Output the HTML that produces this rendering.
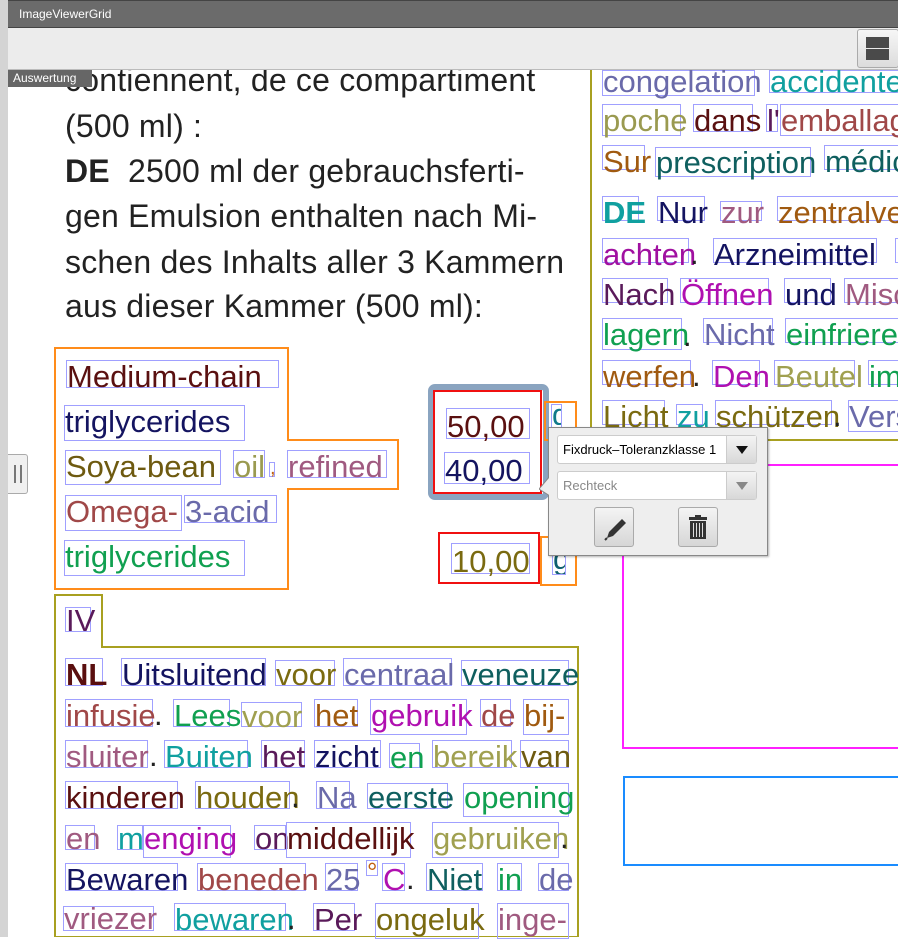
<!DOCTYPE html>
<html><head><meta charset="utf-8"><style>
*{margin:0;padding:0;box-sizing:border-box}
body{width:898px;height:937px;overflow:hidden;position:relative;background:#fff;font-family:"Liberation Sans",sans-serif}
.a{position:absolute}
.t{position:absolute;left:65px;font-size:32px;color:#222;white-space:nowrap;line-height:45px;letter-spacing:0.2px}
.w{position:absolute;border:1px solid #a0a0ff;font-size:31px;white-space:nowrap;line-height:26px;overflow:visible;height:28px;padding-top:3px}
.p{position:absolute;font-size:31px;color:#222;line-height:26px;padding-top:3px}
.dd{position:absolute;left:557px;width:200px;height:29px;background:#fff;border:1px solid #ccc;border-radius:3px;font-size:13px;line-height:27px;padding-left:5px}
.dd i{position:absolute;right:0;top:0;width:30px;height:27px;background:linear-gradient(#f4f4f4,#d8d8d8);border-left:1px solid #ccc}
.btn{position:absolute;top:507px;width:40px;height:40px;border:1px solid #aaa;border-radius:3px;background:linear-gradient(#f4f4f4,#d6d6d6)}
</style></head><body>
<div class="a" style="left:0;top:0;width:8px;height:937px;background:#d4d4d4"></div>
<div class="a" style="left:8px;top:0;width:890px;height:28px;background:#6b6b6b;border-top:1px solid #444;border-bottom:1px solid #444"></div>
<div class="a" style="left:19px;top:7px;font-size:12px;color:#fff">ImageViewerGrid</div>

<div class="t" style="top:58px">contiennent, de ce compartiment</div>
<div class="t" style="top:104px">(500 ml) :</div>
<div class="t" style="top:149px"><b>DE</b>&nbsp; 2500 ml der gebrauchsferti-</div>
<div class="t" style="top:194px">gen Emulsion enthalten nach Mi-</div>
<div class="t" style="top:240px">schen des Inhalts aller 3 Kammern</div>
<div class="t" style="top:284px">aus dieser Kammer (500 ml):</div>

<div class="a" style="left:8px;top:28px;width:890px;height:42px;background:#ececec;border-bottom:1px solid #bbb"></div>
<div class="a" style="left:857px;top:29px;width:42px;height:39px;border:1px solid #aaa;border-radius:3px;background:linear-gradient(#f6f6f6,#dcdcdc)"></div>
<div class="a" style="left:866px;top:37px;width:23px;height:11px;background:#4a4a4a"></div>
<div class="a" style="left:866px;top:49px;width:23px;height:11px;background:#4a4a4a"></div>
<div class="a" style="left:8px;top:70px;width:84px;height:17px;background:#666;color:#fff;font-size:12px;line-height:17px;padding-left:5px">Auswertung</div>

<svg class="a" style="left:0;top:0" width="898" height="937">
<polygon points="55,348 288,348 288,440 398,440 398,489 288,489 288,589 55,589" fill="none" stroke="#ff8c1a" stroke-width="2"/>
<polygon points="55,937 55,595 102,595 102,647 578,647 578,937" fill="none" stroke="#a8a020" stroke-width="2"/>
<polyline points="591,70 591,440 898,440" fill="none" stroke="#a8a020" stroke-width="2"/>
<rect x="623" y="465" width="290" height="283" fill="none" stroke="#ff20ff" stroke-width="2"/>
<rect x="624" y="777" width="290" height="88" fill="none" stroke="#1a8cff" stroke-width="2"/>
<rect x="431" y="387" width="115" height="110" rx="4" fill="#fff" stroke="#8aa4c0" stroke-width="6"/>
<rect x="434" y="391" width="107" height="102" fill="none" stroke="#f01010" stroke-width="2"/>
<rect x="439" y="533" width="100" height="50" fill="none" stroke="#f01010" stroke-width="2"/>
<rect x="545" y="402" width="31" height="38" fill="none" stroke="#ff8c1a" stroke-width="2"/>
<rect x="541" y="537" width="35" height="48" fill="none" stroke="#ff8c1a" stroke-width="2"/>
</svg>

<div class="a" style="left:8px;top:454px;width:20px;height:40px;background:#f0f0f0;border:1px solid #aaa;border-left:none;border-radius:0 3px 3px 0"></div>
<div class="a" style="left:14px;top:465px;width:2px;height:18px;background:#777"></div>
<div class="a" style="left:20px;top:465px;width:2px;height:18px;background:#777"></div>

<div class="w" style="left:66px;top:360px;width:213px;color:#5a1010">Medium-chain</div>
<div class="w" style="left:64px;top:405px;width:181px;height:36px;color:#141460">triglycerides</div>
<div class="w" style="left:65px;top:450px;width:156px;height:35px;color:#6e5a10">Soya-bean</div>
<div class="w" style="left:233px;top:450px;width:32px;color:#9a9a50">oil</div>
<div class="w" style="left:269px;top:462px;width:6px;height:15px;color:#c06010;font-size:20px;line-height:10px;padding:0">,</div>
<div class="w" style="left:287px;top:450px;width:100px;color:#a05a80">refined</div>
<div class="w" style="left:65px;top:495px;width:117px;height:36px;color:#a04848">Omega-</div>
<div class="w" style="left:184px;top:495px;width:93px;color:#6a6aaa">3-acid</div>
<div class="w" style="left:64px;top:540px;width:181px;height:36px;color:#10a050">triglycerides</div>

<div class="w" style="left:446px;top:408px;width:84px;height:31px;color:#5a1010;line-height:29px">50,00</div>
<div class="w" style="left:444px;top:452px;width:86px;height:32px;color:#141460;line-height:30px">40,00</div>
<div class="w" style="left:451px;top:543px;width:79px;height:31px;color:#7a6a10;line-height:29px">10,00</div>
<div class="w" style="left:551px;top:404px;width:11px;height:24px;color:#0f7a8a;overflow:hidden;line-height:14px">g</div>
<div class="w" style="left:552px;top:545px;width:14px;height:30px;color:#0f5f6f;line-height:20px;overflow:hidden">g</div>

<div class="w" style="left:65px;top:607px;width:26px;height:25px;color:#5a1a5a;line-height:22px;padding-top:2px">IV</div>

<div class="w" style="left:65px;top:658px;width:38px;color:#5a0f0f;font-weight:bold">NL</div>
<div class="w" style="left:121px;top:658px;width:145px;color:#141460">Uitsluitend</div>
<div class="w" style="left:275px;top:660px;width:60px;height:26px;color:#7a6a10;line-height:22px">voor</div>
<div class="w" style="left:343px;top:658px;width:109px;color:#6a6aaa">centraal</div>
<div class="w" style="left:461px;top:660px;width:108px;height:26px;color:#0f5f5f;line-height:22px">veneuze</div>

<div class="w" style="left:65px;top:699px;width:88px;color:#a04848">infusie</div><span class="p" style="left:154px;top:699px">.</span>
<div class="w" style="left:173px;top:699px;width:57px;color:#10a050">Lees</div>
<div class="w" style="left:241px;top:702px;width:61px;height:25px;color:#a0a050;line-height:22px">voor</div>
<div class="w" style="left:314px;top:699px;width:44px;color:#a05a10">het</div>
<div class="w" style="left:370px;top:699px;width:97px;height:36px;color:#b010b0">gebruik</div>
<div class="w" style="left:480px;top:699px;width:31px;color:#a04848">de</div>
<div class="w" style="left:523px;top:699px;width:46px;height:36px;color:#a05a10">bij-</div>

<div class="w" style="left:65px;top:740px;width:83px;color:#a05a80">sluiter</div><span class="p" style="left:149px;top:740px">.</span>
<div class="w" style="left:164px;top:740px;width:84px;color:#10a0a0">Buiten</div>
<div class="w" style="left:261px;top:740px;width:44px;color:#5a1a5a">het</div>
<div class="w" style="left:314px;top:740px;width:67px;color:#141460">zicht</div>
<div class="w" style="left:389px;top:743px;width:31px;height:25px;color:#10a050;line-height:22px">en</div>
<div class="w" style="left:432px;top:740px;width:80px;color:#a0a050">bereik</div>
<div class="w" style="left:520px;top:740px;width:49px;color:#6e5a10">van</div>

<div class="w" style="left:65px;top:781px;width:113px;color:#5a1010">kinderen</div>
<div class="w" style="left:195px;top:781px;width:95px;color:#7a6a10">houden</div><span class="p" style="left:291px;top:781px">.</span>
<div class="w" style="left:316px;top:781px;width:34px;color:#6a6aaa">Na</div>
<div class="w" style="left:367px;top:783px;width:81px;height:26px;color:#0f5f5f;line-height:22px">eerste</div>
<div class="w" style="left:463px;top:783px;width:106px;height:34px;color:#10a050;line-height:22px">opening</div>

<div class="w" style="left:65px;top:825px;width:30px;height:25px;color:#a05a80;line-height:20px">en</div>
<div class="w" style="left:117px;top:825px;width:26px;height:25px;color:#10a0a0;line-height:20px;overflow:hidden">m</div>
<div class="w" style="left:143px;top:825px;width:88px;height:33px;color:#b010b0;line-height:20px">enging</div>
<div class="w" style="left:254px;top:825px;width:32px;height:25px;color:#5a1a5a;line-height:20px">on</div>
<div class="w" style="left:286px;top:822px;width:125px;height:36px;color:#5a1010">middellijk</div>
<div class="w" style="left:432px;top:822px;width:127px;height:36px;color:#a0a050">gebruiken</div><span class="p" style="left:560px;top:822px">.</span>

<div class="w" style="left:65px;top:863px;width:113px;color:#141460">Bewaren</div>
<div class="w" style="left:197px;top:863px;width:109px;color:#a04848">beneden</div>
<div class="w" style="left:325px;top:863px;width:33px;color:#6a6aaa">25</div>
<div class="w" style="left:366px;top:860px;width:12px;height:16px;color:#c06010;font-size:26px;line-height:22px;padding:0">°</div>
<div class="w" style="left:382px;top:863px;width:23px;color:#b010b0">C</div><span class="p" style="left:406px;top:863px">.</span>
<div class="w" style="left:426px;top:863px;width:57px;color:#0f5f5f">Niet</div>
<div class="w" style="left:497px;top:863px;width:25px;color:#10a050">in</div>
<div class="w" style="left:538px;top:863px;width:31px;color:#6a6aaa">de</div>

<div class="w" style="left:63px;top:906px;width:91px;height:25px;color:#a05a80;line-height:18px">vriezer</div>
<div class="w" style="left:174px;top:903px;width:112px;color:#10a0a0">bewaren</div><span class="p" style="left:287px;top:903px">.</span>
<div class="w" style="left:313px;top:903px;width:42px;color:#5a1a5a">Per</div>
<div class="w" style="left:375px;top:903px;width:104px;height:36px;color:#7a6a10">ongeluk</div>
<div class="w" style="left:497px;top:903px;width:72px;height:36px;color:#a05a80">inge-</div>

<div class="w" style="left:602px;top:70px;width:153px;height:26px;color:#6a6aaa;line-height:16px">congelation</div>
<div class="w" style="left:769px;top:70px;width:140px;height:23px;color:#10a0a0;line-height:16px">accidente</div>
<div class="w" style="left:602px;top:104px;width:79px;height:32px;color:#9a9a50">poche</div>
<div class="w" style="left:693px;top:104px;width:60px;color:#5a1010">dans</div>
<div class="w" style="left:766px;top:104px;width:12px;color:#5a1a5a">l'</div>
<div class="w" style="left:780px;top:104px;width:130px;height:32px;color:#a04848">emballag</div>
<div class="w" style="left:602px;top:145px;width:43px;height:25px;color:#a05a10">Sur</div>
<div class="w" style="left:655px;top:147px;width:156px;height:30px;color:#0f5f5f;line-height:24px">prescription</div>
<div class="w" style="left:824px;top:145px;width:90px;height:25px;color:#0f5f5f">médic</div>
<div class="w" style="left:602px;top:196px;width:37px;height:25px;color:#10a0a0;font-weight:bold;line-height:25px">DE</div>
<div class="w" style="left:657px;top:196px;width:48px;height:25px;color:#141460;line-height:25px">Nur</div>
<div class="w" style="left:720px;top:201px;width:42px;height:20px;color:#a05a80;line-height:16px">zur</div>
<div class="w" style="left:777px;top:196px;width:130px;height:25px;color:#a05a10;line-height:25px">zentralve</div>
<div class="w" style="left:602px;top:238px;width:87px;height:25px;color:#a010a0;line-height:25px">achten</div><span class="p" style="left:690px;top:238px">.</span>
<div class="w" style="left:713px;top:238px;width:164px;height:25px;color:#141460;line-height:25px">Arzneimittel</div>
<div class="w" style="left:895px;top:238px;width:10px;height:25px"></div>
<div class="w" style="left:602px;top:278px;width:66px;height:25px;color:#5a1a5a;line-height:25px">Nach</div>
<div class="w" style="left:680px;top:278px;width:89px;height:25px;color:#b010b0;line-height:25px">Öffnen</div>
<div class="w" style="left:784px;top:278px;width:47px;height:25px;color:#141460;line-height:25px">und</div>
<div class="w" style="left:844px;top:278px;width:70px;height:25px;color:#a05a80;line-height:25px">Misc</div>
<div class="w" style="left:602px;top:318px;width:80px;height:32px;color:#10a050;line-height:25px">lagern</div><span class="p" style="left:683px;top:320px">.</span>
<div class="w" style="left:703px;top:318px;width:70px;height:25px;color:#6a6aaa;line-height:25px">Nicht</div>
<div class="w" style="left:785px;top:318px;width:125px;height:25px;color:#10a050;line-height:25px">einfriere</div>
<div class="w" style="left:602px;top:360px;width:89px;height:25px;color:#a05a10;line-height:25px">werfen</div><span class="p" style="left:692px;top:360px">.</span>
<div class="w" style="left:712px;top:360px;width:48px;height:25px;color:#b010b0;line-height:25px">Den</div>
<div class="w" style="left:774px;top:360px;width:81px;height:25px;color:#a0a050;line-height:25px">Beutel</div>
<div class="w" style="left:868px;top:360px;width:40px;height:25px;color:#10a050;line-height:25px">im</div>
<div class="w" style="left:602px;top:400px;width:63px;height:25px;color:#7a6a10;line-height:25px">Licht</div>
<div class="w" style="left:676px;top:404px;width:27px;height:21px;color:#10a0a0;line-height:18px">zu</div>
<div class="w" style="left:715px;top:400px;width:117px;height:25px;color:#7a6a10;line-height:25px">schützen</div><span class="p" style="left:833px;top:400px">.</span>
<div class="w" style="left:848px;top:400px;width:60px;height:32px;color:#6a6aaa;line-height:25px">Vers</div>

<div class="a" style="left:548px;top:427px;width:220px;height:129px;background:#eee;border:1px solid #888;box-shadow:1px 1px 2px rgba(0,0,0,.3)"></div>
<svg class="a" style="left:539px;top:476px" width="12" height="22"><polygon points="11,0 0,13 11,20" fill="#eee" stroke="#888"/><rect x="10" y="0" width="3" height="22" fill="#eee"/></svg>
<div class="dd" style="top:435px">Fixdruck–Toleranzklasse 1<i><svg width="30" height="27"><polygon points="9,10 21,10 15,18" fill="#111"/></svg></i></div>
<div class="dd" style="top:471px;color:#888">Rechteck<i><svg width="30" height="27"><polygon points="9,10 21,10 15,18" fill="#888"/></svg></i></div>
<div class="btn" style="left:594px"><svg width="38" height="38"><path d="M12 30 L14 24 L27 11 L31 15 L18 28 Z" fill="#333"/><path d="M12 30 L10 32" stroke="#333" stroke-width="2"/></svg></div>
<div class="btn" style="left:678px"><svg width="38" height="38"><rect x="10" y="9" width="18" height="3" fill="#333"/><rect x="16" y="7" width="6" height="3" fill="#333"/><path d="M11 13 H27 V31 H11 Z" fill="#333"/><path d="M14.5 15V29M17.5 15V29M20.5 15V29M23.5 15V29" stroke="#ddd" stroke-width="1"/></svg></div>
</body></html>
